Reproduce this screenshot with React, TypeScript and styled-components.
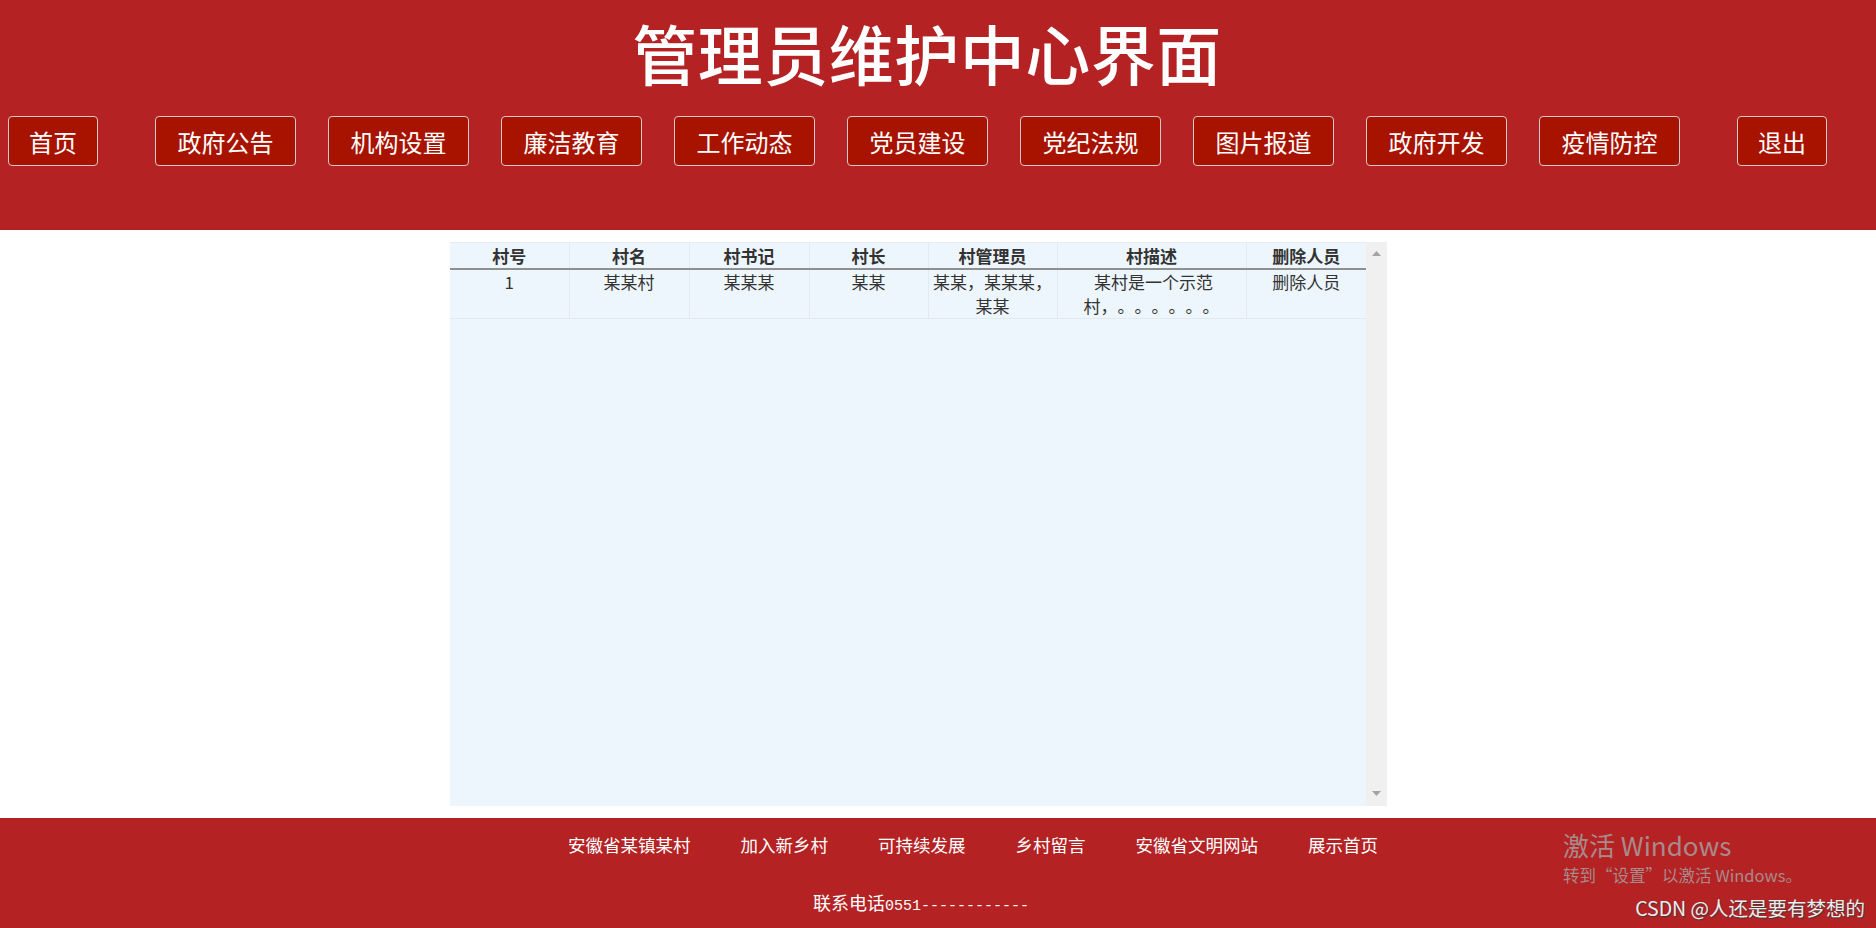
import styled, { createGlobalStyle } from "styled-components";

const GlobalStyle = createGlobalStyle`
    html, body {
        margin: 0;
        padding: 0;
        background: #fff;
        font-family: "Noto Sans CJK SC", "Noto Sans", sans-serif;
        text-spacing-trim: space-all;
    }
`;

const RED = "#b42224";

const Header = styled.header`
    height: 230px;
    box-sizing: border-box;
    padding-top: 12px;
    background: ${RED};
`;

const Title = styled.h1`
    margin: 0;
    padding-right: 22px;
    text-align: center;
    font-size: 65px;
    line-height: 80px;
    font-weight: 500;
    color: #fff;
    letter-spacing: 0.5px;
`;

const Nav = styled.ul`
    display: flex;
    gap: 32px;
    margin: 24px 0 0;
    padding: 0 0 0 8px;
    list-style: none;
`;

const NavButton = styled.li<{ $short?: boolean }>`
    width: ${({ $short }) => ($short ? "90px" : "141px")};
    height: 50px;
    box-sizing: border-box;
    display: flex;
    align-items: center;
    justify-content: center;
    background: #a81300;
    border: 1px solid #dcc8c8;
    border-radius: 4px;
    color: #fff;
    font-size: 24px;
    cursor: pointer;

    &:first-child {
        margin-right: 25px;
    }

    &:last-child {
        margin-left: 25px;
    }
`;

const Main = styled.main`
    padding: 12px 0 12px 450px;
`;

const Panel = styled.div`
    display: flex;
    width: 937px;
    height: 564px;
`;

const TableArea = styled.div`
    flex: 1;
    background: #eef6fd;
    overflow: hidden;
`;

const Table = styled.table`
    width: 916px;
    table-layout: fixed;
    border-collapse: collapse;
    color: #333;
    font-size: 17px;
`;

const Th = styled.th`
    height: 25px;
    padding: 0;
    line-height: 25px;
    font-weight: 700;
    text-align: center;
    border-top: 1px solid #e6edf3;
    border-right: 1px solid #e3eaf0;
    border-bottom: 2px solid #8f8f8f;

    &:last-child {
        border-right: none;
    }
`;

const Td = styled.td`
    padding: 0;
    line-height: 24px;
    height: 48px;
    vertical-align: top;
    text-align: center;
    border-right: 1px solid #e3eaf0;
    border-bottom: 1px solid #e2e9ef;

    &:last-child {
        border-right: none;
    }
`;

const Wrap = styled.div<{ $width: number }>`
    width: ${({ $width }) => $width}px;
    margin: 0 auto;
`;

const ScrollTrack = styled.div`
    width: 21px;
    background: #f0f0f0;
    display: flex;
    flex-direction: column;
    align-items: center;
    justify-content: space-between;
    padding: 9px 0 10px;
    box-sizing: border-box;
`;

const Footer = styled.footer`
    position: relative;
    height: 110px;
    box-sizing: border-box;
    padding-top: 16px;
    background: ${RED};
    color: #fff;
`;

const Links = styled.ul`
    display: flex;
    justify-content: center;
    gap: 50px;
    margin: 0;
    padding: 0 0 0 70px;
    list-style: none;
    font-size: 17.5px;
    line-height: 22px;
`;

const Phone = styled.p`
    margin: 35px 0 0;
    padding-right: 34px;
    text-align: center;
    font-size: 18px;
    line-height: 22px;
`;

const Digits = styled.span`
    font-family: "Liberation Mono", monospace;
    font-size: 15px;
`;

const Activate = styled.div`
    position: absolute;
    left: 1563px;
    top: 9px;
    color: #a98a8a;
`;

const ActivateTitle = styled.div`
    font-size: 26px;
    line-height: 36px;
`;

const ActivateHint = styled.div`
    font-size: 16.5px;
    line-height: 24px;
`;

const Credit = styled.div`
    position: absolute;
    right: 11px;
    top: 77px;
    font-size: 19.5px;
    line-height: 26px;
    color: #ececec;
    text-shadow: 1px 1px 1px #3a3a3a;
`;

const navItems = ["首页", "政府公告", "机构设置", "廉洁教育", "工作动态", "党员建设", "党纪法规", "图片报道", "政府开发", "疫情防控", "退出"];
const columns = [119, 120, 120, 119, 129, 189, 120];
const headers = ["村号", "村名", "村书记", "村长", "村管理员", "村描述", "删除人员"];
const footerLinks = ["安徽省某镇某村", "加入新乡村", "可持续发展", "乡村留言", "安徽省文明网站", "展示首页"];

function Arrow({ down }: { down?: boolean }) {
    return (
        <svg width="9" height="5" viewBox="0 0 9 5">
            <path d={down ? "M0 0 L9 0 L4.5 5 Z" : "M0 5 L9 5 L4.5 0 Z"} fill="#a3a3a3" />
        </svg>
    );
}

export default function App() {
    return (
        <>
            <GlobalStyle />
            <Header>
                <Title>管理员维护中心界面</Title>
                <Nav>
                    {navItems.map((item) => (
                        <NavButton key={item} $short={item.length === 2}>{item}</NavButton>
                    ))}
                </Nav>
            </Header>

            <Main>
                <Panel>
                    <TableArea>
                        <Table>
                            <colgroup>
                                {columns.map((w, i) => (
                                    <col key={i} style={{ width: w }} />
                                ))}
                            </colgroup>
                            <thead>
                                <tr>
                                    {headers.map((h) => (
                                        <Th key={h}>{h}</Th>
                                    ))}
                                </tr>
                            </thead>
                            <tbody>
                                <tr>
                                    <Td>1</Td>
                                    <Td>某某村</Td>
                                    <Td>某某某</Td>
                                    <Td>某某</Td>
                                    <Td>某某，某某某，某某</Td>
                                    <Td>
                                        <Wrap $width={140}>{"\u00a0某村是一个示范村，。。。。。。"}</Wrap>
                                    </Td>
                                    <Td>删除人员</Td>
                                </tr>
                            </tbody>
                        </Table>
                    </TableArea>
                    <ScrollTrack>
                        <Arrow />
                        <Arrow down />
                    </ScrollTrack>
                </Panel>
            </Main>

            <Footer>
                <Links>
                    {footerLinks.map((l) => (
                        <li key={l}>{l}</li>
                    ))}
                </Links>
                <Phone>
                    联系电话<Digits>0551------------</Digits>
                </Phone>
                <Activate>
                    <ActivateTitle>激活 Windows</ActivateTitle>
                    <ActivateHint>转到“设置”以激活 Windows。</ActivateHint>
                </Activate>
                <Credit>CSDN @人还是要有梦想的</Credit>
            </Footer>
        </>
    );
}
